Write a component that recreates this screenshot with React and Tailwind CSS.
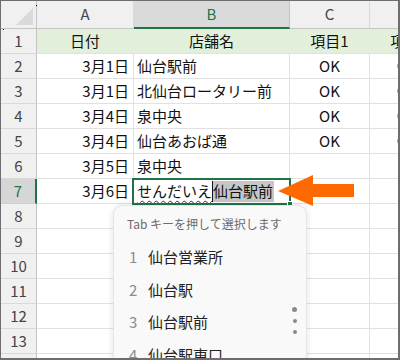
import React from "react";

const FONT = { fontFamily: '"Noto Sans CJK JP", "Noto Sans", sans-serif' };

const data = {
  1: { a: "日付", b: "店舗名", c: "項目1", d: "項目2", head: true },
  2: { a: "3月1日", b: "仙台駅前", c: "OK", dot: true },
  3: { a: "3月1日", b: "北仙台ロータリー前", c: "OK", dot: true },
  4: { a: "3月4日", b: "泉中央", c: "OK", dot: true },
  5: { a: "3月4日", b: "仙台あおば通", c: "OK", dot: true },
  6: { a: "3月5日", b: "泉中央" },
  7: { a: "3月6日", edit: true },
};

const rowNums = [1, 2, 3, 4, 5, 6, 7, 8, 9, 10, 11, 12, 13, 14];

function Row({ n }) {
  const r = data[n] || {};
  const sel = n === 7;
  const cell = r.head
    ? "h-[25px] flex items-center bg-[#e2efda] border-b border-[#e1e1e1] border-r-[#e2efda] border-r"
    : "h-[25px] flex items-center bg-white border-b border-r border-[#e1e1e1]";
  return (
    <>
      <div
        className={
          sel
            ? "h-[25px] flex items-center justify-center bg-[#d6d6d6] border-b border-b-[#d0d0d0] border-r-2 border-r-[#217346] text-[15px] text-[#217346]"
            : "h-[25px] flex items-center justify-center bg-[#f0f0f0] border-b border-b-[#d9d9d9] border-r border-r-[#c4c4c4] text-[15px] text-[#444]"
        }
      >
        {n < 14 ? n : ""}
      </div>
      <div className={cell + (r.head ? " justify-center" : " justify-end pr-[4px]")}>
        <span className="text-[15px] text-[#111]">{r.a}</span>
      </div>
      <div className={cell + (r.head ? " justify-center" : " justify-start pl-[3px]")}>
        {r.edit ? (
          <div className="flex items-center h-[21px] text-[15px] text-[#111] whitespace-nowrap">
            <span className="underline decoration-wavy decoration-1 decoration-[#333] underline-offset-[3px]">
              せんだいえ
            </span>
            <span className="w-px h-[21px] bg-[#111]"></span>
            <span className="bg-[#c6c6c6] h-[21px] flex items-center pr-[1px]">仙台駅前</span>
          </div>
        ) : (
          <span className="text-[15px] text-[#111] whitespace-nowrap">{r.b}</span>
        )}
      </div>
      <div className={cell + " justify-center"}>
        <span className="text-[15px] text-[#111]">{r.c}</span>
      </div>
      <div className={cell + (r.dot ? " justify-start pl-[27px]" : " justify-center")}>
        {r.dot ? (
          <span className="w-[6px] h-[6px] rounded-full bg-[#f2902a]"></span>
        ) : (
          <span className="text-[15px] text-[#111] whitespace-nowrap">{r.d}</span>
        )}
      </div>
    </>
  );
}

export default function App() {
  return (
    <div
      className="relative w-[400px] h-[360px] overflow-hidden bg-white border-l border-t border-r-2 border-b-2 border-[#6e6e6e]"
      style={FONT}
    >
      <div className="grid grid-cols-[36px_97px_156px_80px_80px] w-[449px]">
        {/* header row */}
        <div className="h-[28px] bg-[#f0f0f0] border-b border-b-[#c4c4c4] border-r border-r-[#c4c4c4] flex items-end justify-end pr-[3px] pb-[3px]">
          <svg width="17" height="17" viewBox="0 0 17 17">
            <polygon points="17,0 17,17 0,17" fill="#d9d9d9" />
          </svg>
        </div>
        <div className="h-[28px] bg-[#f0f0f0] border-b border-b-[#c4c4c4] border-r border-r-[#d9d9d9] flex items-center justify-center text-[15px] text-[#444]">
          A
        </div>
        <div className="h-[28px] bg-[#dadada] border-b-2 border-b-[#217346] border-r border-r-[#c4c4c4] flex items-center justify-center text-[15px] text-[#217346]">
          B
        </div>
        <div className="h-[28px] bg-[#f0f0f0] border-b border-b-[#c4c4c4] border-r border-r-[#d9d9d9] flex items-center justify-center text-[15px] text-[#444]">
          C
        </div>
        <div className="h-[28px] bg-[#f0f0f0] border-b border-b-[#c4c4c4] border-r border-r-[#d9d9d9]"></div>
        {rowNums.map((n) => (
          <Row key={n} n={n} />
        ))}
      </div>

      {/* tiny artifacts */}
      <div className="absolute left-[35px] top-[4px] w-px h-px bg-black"></div>
      <div className="absolute left-[2px] top-[28px] w-px h-px bg-black"></div>

      {/* active cell selection */}
      <div className="absolute left-[131px] top-[177px] w-[159px] h-[27px] border-2 border-[#217346]"></div>
      <div className="absolute left-[286px] top-[200px] w-[6px] h-[6px] bg-[#217346] border border-white"></div>

      {/* orange arrow */}
      <svg className="absolute left-[276px] top-[173px]" width="80" height="34" viewBox="0 0 80 34">
        <polygon points="1,17 36,1 36,10 77,10 77,23 36,23 36,32" fill="#ff6a00" />
      </svg>

      {/* IME candidate window */}
      <div className="absolute left-[112px] top-[204px] w-[194px] h-[170px] bg-[#f9f9f9] rounded-t-[10px] border border-[#e6e6e6] shadow-[0_0_6px_rgba(0,0,0,0.12)]">
        <div className="h-[35px] flex items-center pl-[13px] text-[12px] text-[#6b6b6b]">
          Tab キーを押して選択します
        </div>
        {["仙台営業所", "仙台駅", "仙台駅前", "仙台駅東口"].map((t, i) => (
          <div key={t} className="h-[32.5px] flex items-center pl-[15px] text-[15px]">
            <span className="w-[19px] text-[#8c8c8c]">{i + 1}</span>
            <span className="text-[#222]">{t}</span>
          </div>
        ))}
        <div className="absolute right-[9px] top-[101px] flex flex-col items-center gap-[7px]">
          <span className="w-[5px] h-[5px] rounded-full bg-[#8a8a8a]"></span>
          <span className="w-[4px] h-[4px] rounded-full bg-[#8a8a8a]"></span>
          <span className="w-[4px] h-[4px] rounded-full bg-[#8a8a8a]"></span>
        </div>
      </div>
    </div>
  );
}
